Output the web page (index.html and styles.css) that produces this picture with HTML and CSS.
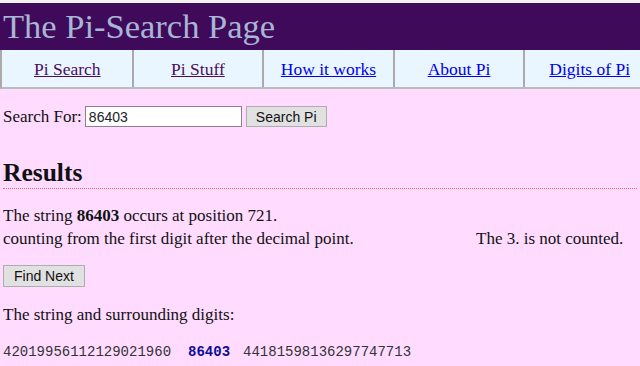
FILE: index.html
```html
<!DOCTYPE html>
<html lang="en">
<head>
    <meta charset="UTF-8">
    <title>The Pi-Search Page</title>
    <link rel="stylesheet" href="styles.css">
</head>
<body>
    <div class="banner">The Pi-Search Page</div>
    <div class="nav">
        <a class="visited" href="#">Pi Search</a>
        <a class="visited" href="#">Pi Stuff</a>
        <a href="#">How it works</a>
        <a href="#">About Pi</a>
        <a href="#">Digits of Pi</a>
    </div>

    <div class="content">
        <form class="search">
            <label for="q">Search For:</label>
            <input id="q" type="text" value="86403">
            <button type="button">Search Pi</button>
        </form>

        <h2>Results</h2>

        <p class="found">The string <b>86403</b> occurs at position 721.<br>
        counting from the first digit after the decimal point. <span class="note">The 3. is not counted.</span></p>

        <button type="button" class="next">Find Next</button>

        <p class="around">The string and surrounding digits:</p>

        <div class="digits">42019956112129021960<span class="hit">86403</span>44181598136297747713</div>
    </div>
</body>
</html>
```

FILE: styles.css
```css
html {
    overflow: hidden;
}

body {
    margin: 0;
    border-top: 3px solid #f2f2f2;
    background-color: #ffdcff;
    color: #111;
    font-family: "Liberation Serif", "Times New Roman", serif;
    font-size: 17px;
    min-height: 363px;
}

.banner {
    height: 47px;
    padding-left: 3px;
    background-color: #3f0a59;
    color: #a7b6d6;
    font-size: 34.5px;
    line-height: 46px;
}

.nav {
    display: grid;
    grid-template-columns: repeat(5, 130.6px);
    width: 660px;
    padding-left: 1px;
    background-color: #eaf6ff;
    border-left: 2px solid #aaa;
    border-bottom: 2px solid #bbb;
}

.nav a {
    height: 37px;
    line-height: 38px;
    text-align: center;
    color: #0000ee;
    border-right: 2px solid #aaa;
    font-size: 17.5px;
}

.nav a.visited {
    color: #4a0d5e;
}

.content {
    padding: 0 3px;
}

.search {
    display: flex;
    align-items: center;
    margin: 17px 0 0;
}

.search input {
    width: 149px;
    height: 17px;
    margin: 0 4px 0 3px;
    padding: 1px 3px;
    border: 1px solid #8a8090;
    font-family: "Liberation Sans", Arial, sans-serif;
    font-size: 14px;
    color: #222;
}

button {
    padding: 1px 9px;
    height: 21px;
    border: 1px solid #adadad;
    background-color: #e1e1e1;
    color: #111;
    font-family: "Liberation Sans", Arial, sans-serif;
    font-size: 14px;
}

h2 {
    margin: 32px 0 0;
    padding-bottom: 1px;
    border-bottom: 1px dotted #ff5c5c;
    font-size: 25.5px;
    line-height: 28px;
}

.found {
    margin: 15px 0 15px;
    line-height: 23px;
}

.note {
    margin-left: 118px;
}

.next {
    height: 22px;
    padding: 1px 10px;
}

.around {
    margin: 18px 0 19px;
}

.digits {
    font-family: "Liberation Mono", "DejaVu Sans Mono", monospace;
    font-size: 14px;
    color: #333;
}

.hit {
    margin: 0 13px 0 17px;
    color: #0c0c9c;
    font-weight: bold;
}
```
